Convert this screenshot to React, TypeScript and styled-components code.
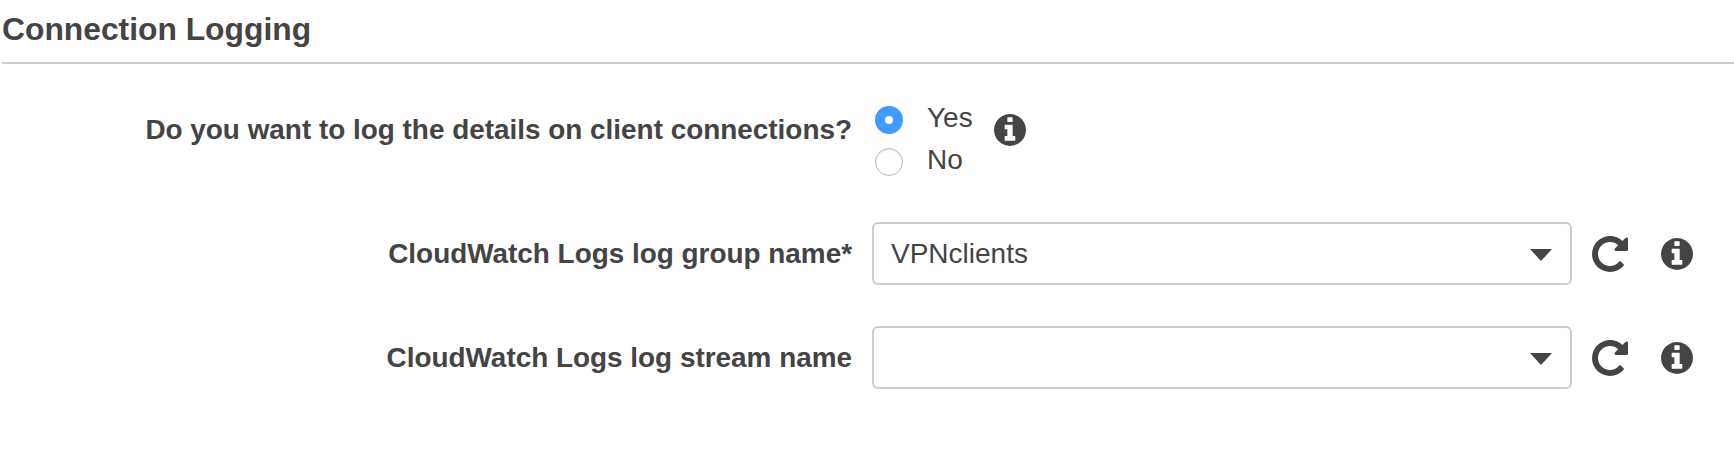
import React from "react";
import styled, { createGlobalStyle } from "styled-components";

const GlobalStyle = createGlobalStyle`
  html, body {
    margin: 0;
    background: #fff;
  }
  body {
    font-family: "Liberation Sans", Arial, sans-serif;
    color: #444;
  }
`;

const Page = styled.div`
  width: 1734px;
  height: 458px;
  overflow: hidden;
  padding-left: 2px;
  box-sizing: border-box;
`;

const Title = styled.h2`
  margin: 0;
  height: 64px;
  box-sizing: border-box;
  padding-top: 11px;
  border-bottom: 2px solid #ccc;
  font-size: 31.8px;
  line-height: 36px;
  font-weight: 700;
  color: #444;
`;

const Form = styled.div`
  display: flex;
  flex-direction: column;
  padding-top: 31px;
`;

const Row = styled.div<{ $height: number; $gap?: number }>`
  display: grid;
  grid-template-columns: 850px 700px 1fr;
  column-gap: 20px;
  align-items: center;
  height: ${(p) => p.$height}px;
  margin-bottom: ${(p) => p.$gap ?? 0}px;
`;

const Label = styled.label`
  text-align: right;
  font-size: 27.9px;
  font-weight: 700;
  color: #444;
`;

const RadioCell = styled.div`
  display: flex;
  align-items: flex-start;
  gap: 21px;
  height: 70px;
`;

const RadioList = styled.div`
  display: flex;
  flex-direction: column;
  gap: 14px;
  margin-top: 11px;
  padding-left: 3px;
`;

const RadioRow = styled.div`
  display: flex;
  align-items: center;
  gap: 24px;
  height: 28px;
  font-size: 28px;
  color: #444;
`;

const RadioText = styled.span`
  padding-bottom: 4px;
`;

const RadioDot = styled.span<{ $checked?: boolean }>`
  width: 28px;
  height: 28px;
  box-sizing: border-box;
  border-radius: 50%;
  display: flex;
  align-items: center;
  justify-content: center;
  background: ${(p) => (p.$checked ? "#3f9bfc" : "#fff")};
  border: ${(p) => (p.$checked ? "none" : "1.5px solid #bbb")};
  box-shadow: ${(p) => (p.$checked ? "none" : "inset 0 1px 2px rgba(0,0,0,.12)")};

  &::after {
    content: "";
    display: ${(p) => (p.$checked ? "block" : "none")};
    width: 8px;
    height: 8px;
    border-radius: 50%;
    background: #fff;
  }
`;

const SelectBox = styled.div`
  height: 63px;
  box-sizing: border-box;
  border: 2px solid #ccc;
  border-radius: 6px;
  display: flex;
  align-items: center;
  justify-content: space-between;
  padding: 0 18px 0 17px;
  font-size: 28px;
  color: #444;
`;

const Caret = styled.span`
  width: 0;
  height: 0;
  margin-top: 2px;
  border-left: 11.5px solid transparent;
  border-right: 11.5px solid transparent;
  border-top: 12px solid #444;
`;

const Actions = styled.div`
  display: flex;
  align-items: center;
  gap: 33px;
  color: #444;
`;

const IconSvg = styled.svg<{ $size: number; $top?: number }>`
  display: block;
  flex: none;
  width: ${(p) => p.$size}px;
  height: ${(p) => p.$size}px;
  margin-top: ${(p) => p.$top ?? 0}px;
  fill: #444;
`;

const InfoIcon: React.FC<{ top?: number }> = ({ top }) => (
  <IconSvg viewBox="0 0 1536 1536" $size={32} $top={top}>
    <path d="M1024 1248v-160q0-14-9-23t-23-9h-96v-512q0-14-9-23t-23-9h-320q-14 0-23 9t-9 23v160q0 14 9 23t23 9h96v320h-96q-14 0-23 9t-9 23v160q0 14 9 23t23 9h448q14 0 23-9t9-23zm-128-896v-160q0-14-9-23t-23-9h-192q-14 0-23 9t-9 23v160q0 14 9 23t23 9h192q14 0 23-9t9-23zm640 416q0 209-103 385.5t-279.5 279.5-385.5 103-385.5-103-279.5-279.5-103-385.5 103-385.5 279.5-279.5 385.5-103 385.5 103 279.5 279.5 103 385.5z" />
  </IconSvg>
);

const RefreshIcon = () => (
  <IconSvg viewBox="0 128 1536 1536" $size={36}>
    <path d="M1536 256v448q0 26-19 45t-45 19h-448q-42 0-59-40-17-39 14-69l138-138q-148-137-349-137-104 0-198.5 40.5t-163.5 109.5-109.5 163.5-40.5 198.5 40.5 198.5 109.5 163.5 163.5 109.5 198.5 40.5q119 0 225-52t179-147q7-10 23-12 14 0 25 9l137 138q9 8 9.5 20.5t-7.5 22.5q-109 132-264 204.5t-327 72.5q-156 0-298-61t-245-164-164-245-61-298 61-298 164-245 245-164 298-61q147 0 284.5 55.5t244.5 156.5l130-129q29-31 70-14 39 17 39 59z" />
  </IconSvg>
);

const SelectRow: React.FC<{ label: string; value?: string; gap?: number }> = ({
  label,
  value,
  gap,
}) => (
  <Row $height={63} $gap={gap}>
    <Label>{label}</Label>
    <SelectBox>
      <span>{value}</span>
      <Caret />
    </SelectBox>
    <Actions>
      <RefreshIcon />
      <InfoIcon />
    </Actions>
  </Row>
);

export default function App() {
  return (
    <Page>
      <GlobalStyle />
      <Title>Connection Logging</Title>
      <Form>
        <Row $height={70} $gap={57}>
          <Label>Do you want to log the details on client connections?</Label>
          <RadioCell>
            <RadioList>
              <RadioRow>
                <RadioDot $checked />
                <RadioText>Yes</RadioText>
              </RadioRow>
              <RadioRow>
                <RadioDot />
                <RadioText>No</RadioText>
              </RadioRow>
            </RadioList>
            <InfoIcon top={19} />
          </RadioCell>
        </Row>
        <SelectRow
          label="CloudWatch Logs log group name*"
          value="VPNclients"
          gap={41}
        />
        <SelectRow label="CloudWatch Logs log stream name" />
      </Form>
    </Page>
  );
}
